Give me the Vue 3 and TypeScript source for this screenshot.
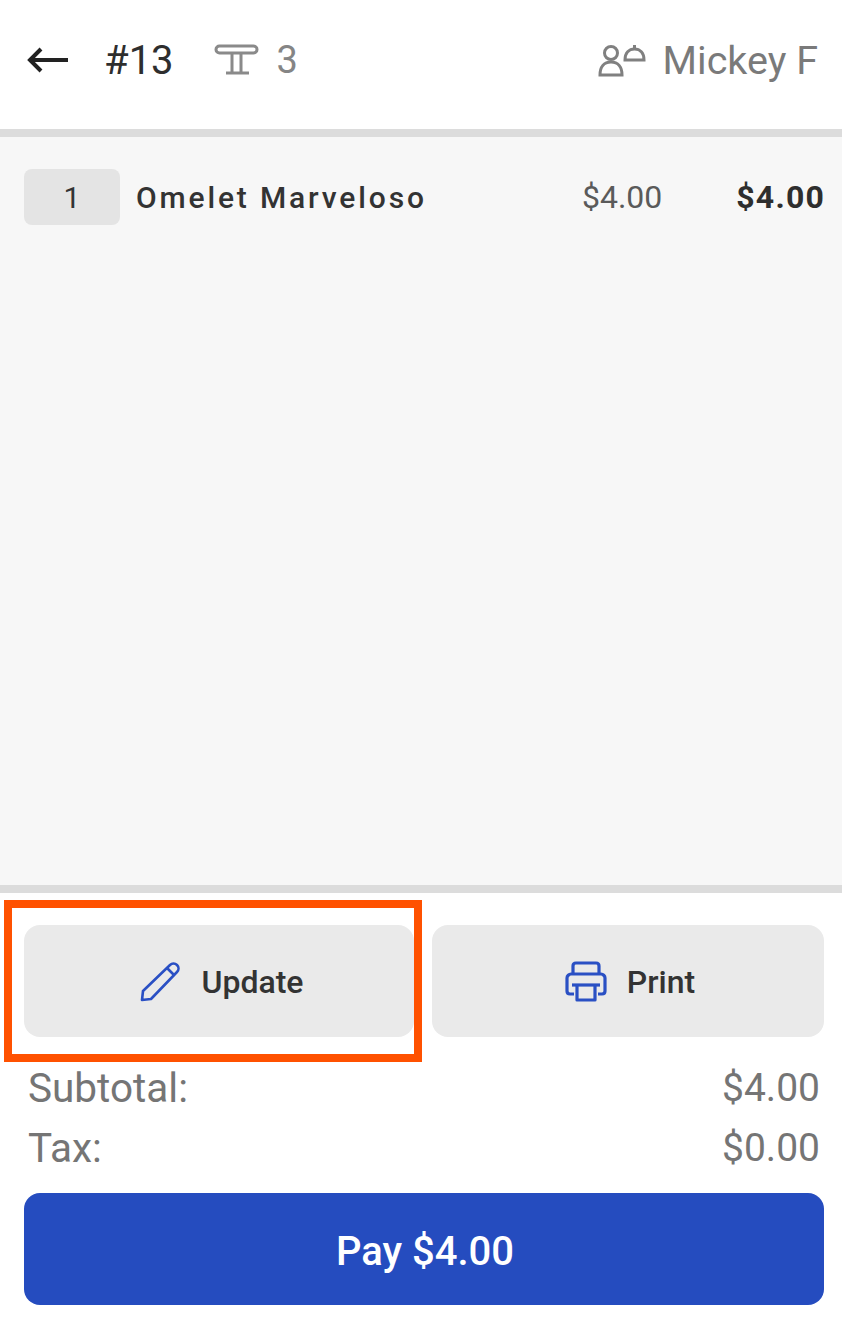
<script setup lang="ts">
const totals = [
  { label: 'Subtotal:', value: '$4.00' },
  { label: 'Tax:', value: '$0.00' },
]
</script>

<template>
  <div class="page">
    <header class="header">
      <svg class="back" width="44" height="30" viewBox="0 0 44 30" fill="none" stroke="#222" stroke-width="4">
        <path d="M3 15H42" />
        <path d="M15 4L4 15L15 26" />
      </svg>
      <span class="order">#13</span>
      <svg class="table" width="46" height="32" viewBox="0 0 46 32" fill="none" stroke="#8a8a8a" stroke-width="3">
        <rect x="2" y="2" width="41" height="7" rx="3.5" />
        <path d="M18 9V28M27 9V28" />
        <path d="M12 29H35" />
      </svg>
      <span class="seat">3</span>
      <span class="spacer"></span>
      <svg class="server" width="50" height="34" viewBox="0 0 50 34" fill="none" stroke="#808080" stroke-width="3">
        <circle cx="15" cy="10" r="6.5" />
        <path d="M4 32C4 24 8 19 15 19C22 19 26 24 26 32Z" />
        <path d="M29 17C29 10 33 6 38.5 6C44 6 48 10 48 17Z" />
        <path d="M38.5 6V2" />
      </svg>
      <span class="server-name">Mickey F</span>
    </header>

    <main class="items">
      <div class="item">
        <span class="qty">1</span>
        <span class="name">Omelet Marveloso</span>
        <span class="price">$4.00</span>
        <span class="line-total">$4.00</span>
      </div>
    </main>

    <footer class="footer">
      <div class="actions">
        <button class="action update" type="button">
          <svg width="42" height="42" viewBox="0 0 42 42" fill="none" stroke="#2a50c4" stroke-width="2.6" stroke-linejoin="round">
            <path d="M2 39L3 30L30 4C32 2 35 2 37 4C39 6 39 9 37 11L11 38Z" />
            <path d="M27 7L34 14" />
          </svg>
          <span>Update</span>
          <span class="highlight"></span>
        </button>
        <button class="action print" type="button">
          <svg width="42" height="42" viewBox="0 0 42 42" fill="none" stroke="#2a50c4" stroke-width="3.2" stroke-linejoin="round">
            <path d="M8 13V5C8 3 9 2 11 2H31C33 2 34 3 34 5V13" />
            <path d="M9 33H5C3 33 2 32 2 30V17C2 15 4 13 6 13H36C38 13 40 15 40 17V30C40 32 39 33 37 33H33" />
            <path d="M7 24H35" />
            <path d="M12 24V39H30V24" />
          </svg>
          <span>Print</span>
        </button>
      </div>

      <div class="totals">
        <div v-for="row in totals" :key="row.label" class="total-row">
          <span class="total-label">{{ row.label }}</span>
          <span class="total-value">{{ row.value }}</span>
        </div>
      </div>

      <button class="pay" type="button">Pay $4.00</button>
    </footer>
  </div>
</template>

<style>
html,
body {
  margin: 0;
  background: #fff;
}
</style>

<style scoped>
.page {
  width: 842px;
  height: 1330px;
  display: flex;
  flex-direction: column;
  background: #fff;
  font-family: Roboto, "Liberation Sans", sans-serif;
  overflow: hidden;
}
.header {
  height: 129px;
  box-sizing: border-box;
  display: flex;
  align-items: center;
  padding: 0 24px 9px 26px;
}
.back {
  margin-right: 34px;
}
.order {
  font-size: 40px;
  color: #2e2e2e;
  margin-right: 40px;
}
.table {
  margin-right: 17px;
}
.seat {
  font-size: 38px;
  color: #858585;
}
.spacer {
  flex: 1;
}
.server {
  margin-right: 17px;
}
.server-name {
  font-size: 39.5px;
  color: #7a7a7a;
}
.items {
  height: 748px;
  border-top: 8px solid #dcdcdc;
  border-bottom: 8px solid #dcdcdc;
  background: #f7f7f7;
  padding: 0 17px 0 24px;
}
.item {
  margin-top: 32px;
  display: flex;
  align-items: center;
  height: 56px;
}
.qty {
  width: 96px;
  height: 56px;
  padding-top: 1px;
  box-sizing: border-box;
  display: flex;
  align-items: center;
  justify-content: center;
  background: #e4e4e4;
  border-radius: 8px;
  font-size: 30px;
  color: #333;
  margin-right: 16px;
}
.name {
  flex: 1;
  font-size: 30px;
  font-weight: 500;
  letter-spacing: 2.85px;
  color: #333;
}
.price {
  font-size: 32px;
  color: #5a5a5a;
  margin-right: 74px;
}
.line-total {
  font-size: 32px;
  font-weight: 700;
  letter-spacing: 1.2px;
  color: #2e2e2e;
}
.footer {
  flex: 1;
  padding: 32px 18px 0 24px;
  display: flex;
  flex-direction: column;
}
.actions {
  display: flex;
  gap: 18px;
  width: 800px;
}
.action {
  position: relative;
  height: 112px;
  display: flex;
  align-items: center;
  justify-content: center;
  gap: 20px;
  padding: 1px 0 0;
  border: 0;
  border-radius: 16px;
  background: #eaeaea;
  font-family: inherit;
  font-size: 32px;
  font-weight: 500;
  color: #333;
}
.update {
  flex: 0 0 390px;
  padding-left: 5px;
}
.print {
  flex: 1;
  padding-left: 4px;
}
.highlight {
  position: absolute;
  left: -20px;
  top: -25px;
  width: 418px;
  height: 162px;
  box-sizing: border-box;
  border: 8px solid #ff5100;
}
.totals {
  width: 800px;
  margin-top: 21px;
}
.total-row {
  height: 60px;
  display: flex;
  align-items: center;
  justify-content: space-between;
  padding: 0 4px;
  box-sizing: border-box;
  color: #757575;
}
.total-label {
  font-size: 40.5px;
}
.total-value {
  font-size: 39px;
}
.pay {
  margin-top: 15px;
  width: 800px;
  height: 112px;
  padding: 5px 0 0 2px;
  border: 0;
  border-radius: 16px;
  background: #254cbf;
  color: #fff;
  font-family: inherit;
  font-size: 40px;
  font-weight: 500;
}
</style>
